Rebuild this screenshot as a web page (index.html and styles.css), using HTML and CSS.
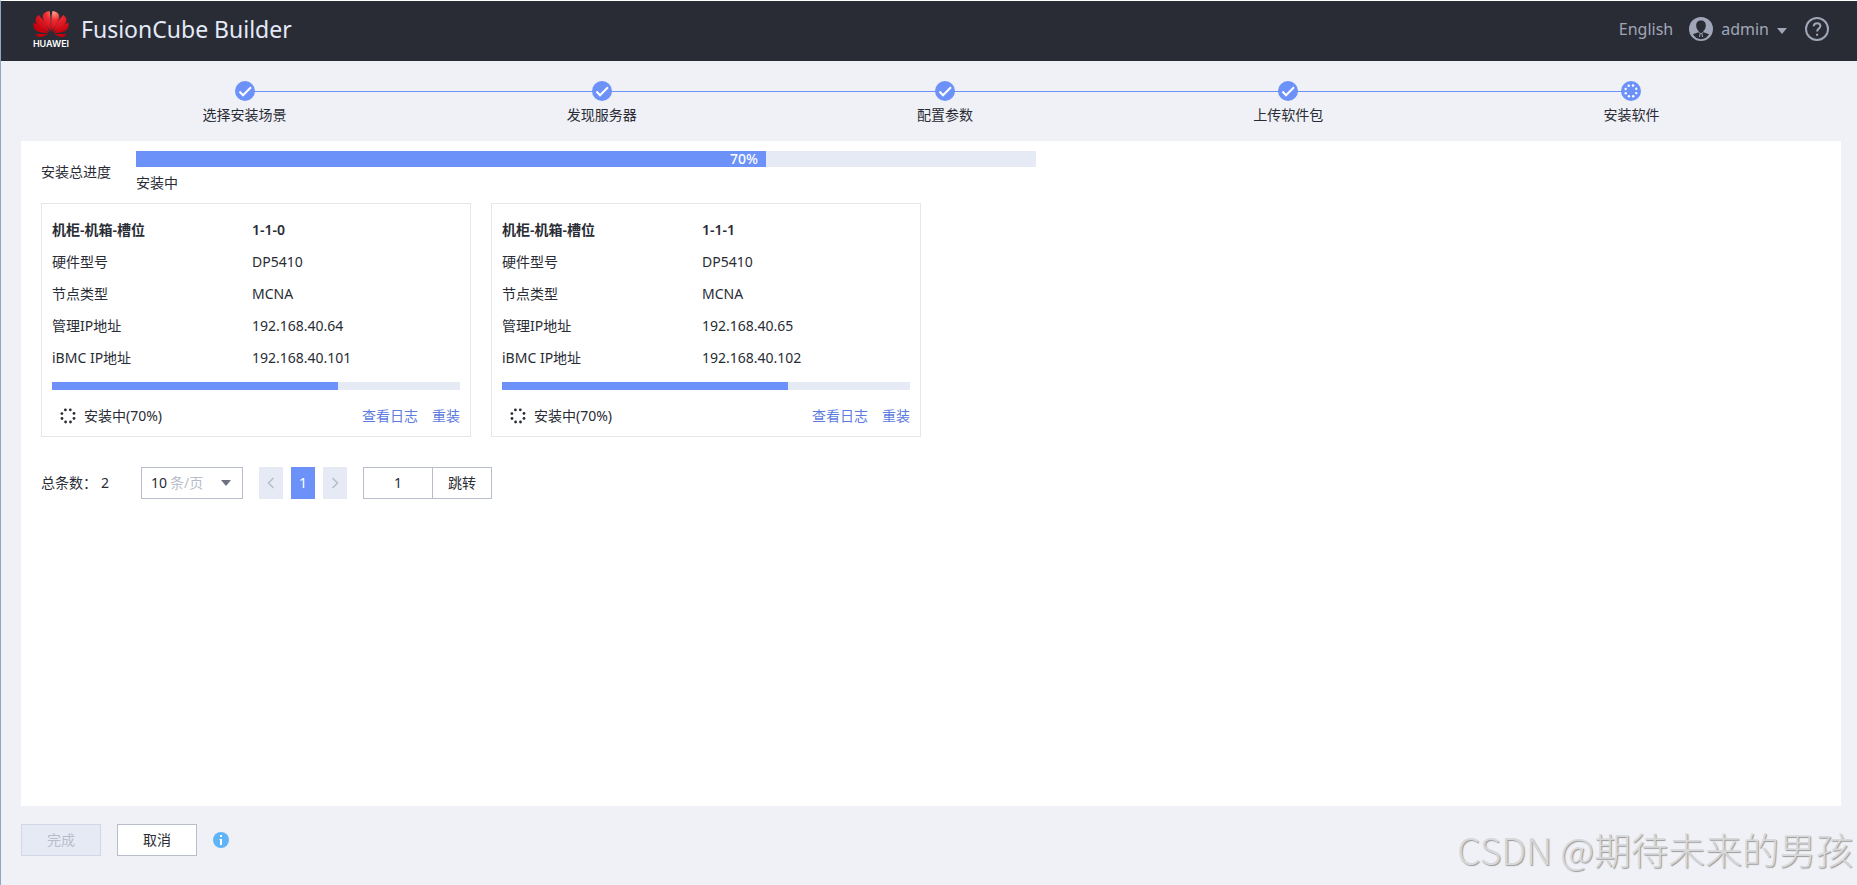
FILE: index.html
```html
<!DOCTYPE html>
<html lang="zh-CN">
<head>
<meta charset="utf-8">
<title>FusionCube Builder</title>
<link rel="stylesheet" href="styles.css">
</head>
<body>
<svg class="defs" aria-hidden="true">
  <symbol id="check" viewBox="0 0 20 20"><circle cx="10" cy="10" r="10" fill="#6c92fa"/><path d="M4.500 10.500l3.500 3.700 8-8" fill="none" stroke="#fff" stroke-width="2"/></symbol>
  <symbol id="dots" viewBox="0 0 16 16"><g fill="currentColor"><circle cx="5.400" cy="1.900" r="1.400"/><circle cx="10.300" cy="1.800" r="1.400"/><circle cx="14" cy="5.400" r="1.400"/><circle cx="14" cy="10.400" r="1.400"/><circle cx="10.500" cy="14" r="1.400"/><circle cx="5.600" cy="14" r="1.400"/><circle cx="2" cy="10.500" r="1.400"/><circle cx="1.900" cy="5.600" r="1.400"/></g></symbol>
</svg>
<header class="topbar">
  <svg class="logo" viewBox="0 0 36 38" role="img" aria-label="HUAWEI">
    <defs><radialGradient id="red" gradientUnits="userSpaceOnUse" cx="21" cy="3" r="24"><stop offset="0" stop-color="#ff9c82"/><stop offset=".35" stop-color="#ee2b32"/><stop offset="1" stop-color="#c4000c"/></radialGradient></defs>
    <g fill="url(#red)" transform="scale(1 .88)">
      <path d="M17.500 24.500C18 17 18 9 16.600 1.200 12 1.600 9.600 4.500 9.800 8c.2 5 4.400 11.500 7.700 16.500z"/>
      <path d="M18.500 24.500C18 17 18 9 19.400 1.200 24 1.600 26.400 4.500 26.200 8c-.2 5-4.400 11.500-7.700 16.500z"/>
      <path d="M16.300 25.300C14 18 10.500 11 5.600 5.800 2.300 8.500 1.600 12 3.800 15.500c2.500 4 8 7.300 12.500 9.800z"/>
      <path d="M19.700 25.300C22 18 25.500 11 30.400 5.800 33.700 8.500 34.400 12 32.200 15.500c-2.500 4-8 7.300-12.500 9.800z"/>
      <path d="M15.500 26.300C11 21.500 5.500 17 .6 14.200-.4 19 1.300 22.800 5 24.500c3 1.300 7 1.700 10.500 1.800z"/>
      <path d="M20.500 26.300C25 21.500 30.500 17 35.400 14.200 36.400 19 34.700 22.800 31 24.500c-3 1.300-7 1.700-10.500 1.800z"/>
      <path d="M15.300 27.200H2.600c1 3.200 4.200 4.400 7.200 3 2-.9 4-2.100 5.500-3z"/>
      <path d="M20.700 27.200h12.700c-1 3.200-4.200 4.400-7.200 3-2-.9-4-2.100-5.500-3z"/>
    </g>
    <text class="logo-text" x="18" y="37" text-anchor="middle">HUAWEI</text>
  </svg>
  <h1 class="product">FusionCube Builder</h1>
  <nav class="tools">
    <a class="tool" href="#">English</a>
    <button class="tool user" type="button">
      <svg width="24" height="24" viewBox="0 0 24 24"><circle cx="12" cy="12" r="12" fill="#a0a6b8"/><path d="M7.200 8.500C7.200 5 9 3.500 12 3.500S16.800 5 16.800 8.500c0 2.600-1 4.300-2.300 5.300v1.400l5.600 2.100c-1.900 3.200-4.800 4.900-8.100 4.900s-6.200-1.700-8.100-4.900l5.600-2.100v-1.400c-1.300-1-2.300-2.700-2.300-5.300z" fill="#292c35"/><path d="M9.500 15l2.500 2 2.500-2M11 17l-.5 3M13 17l.5 3" stroke="#a0a6b8" fill="none"/></svg>
      <span>admin</span>
      <svg class="user-caret" width="10" height="6" viewBox="0 0 10 6"><path d="M0 0h10L5 6z" fill="#a0a6b8"/></svg>
    </button>
    <button class="tool" type="button" aria-label="Help">
      <svg width="24" height="24" viewBox="0 0 24 24" fill="none" stroke="#a0a6b8" stroke-width="2"><circle cx="12" cy="12" r="11"/><path d="M8.700 9.300c.1-2 1.500-3 3.400-3 2 0 3.300 1.100 3.300 2.800 0 2.300-3.300 2.600-3.300 5.400M12.100 16.700v2"/></svg>
    </button>
  </nav>
</header>
<ol class="steps">
  <li class="step"><svg class="mark"><use href="#check"/></svg>选择安装场景</li>
  <li class="step"><svg class="mark"><use href="#check"/></svg>发现服务器</li>
  <li class="step"><svg class="mark"><use href="#check"/></svg>配置参数</li>
  <li class="step"><svg class="mark"><use href="#check"/></svg>上传软件包</li>
  <li class="step"><svg class="mark current" viewBox="0 0 20 20"><circle cx="10" cy="10" r="10" fill="#6c92fa"/><use href="#dots" x="3" y="3" width="14" height="14"/></svg>安装软件</li>
</ol>
<main class="panel">
  <section class="overall">
    <span class="overall-label">安装总进度</span>
    <div class="overall-body">
      <div class="bar bar-large"><div class="fill" style="width:70%">70%</div></div>
      <span>安装中</span>
    </div>
  </section>
  <section class="cards">
    <article class="card">
      <dl class="facts">
        <dt class="strong">机柜-机箱-槽位</dt><dd class="strong">1-1-0</dd>
        <dt>硬件型号</dt><dd>DP5410</dd>
        <dt>节点类型</dt><dd>MCNA</dd>
        <dt>管理IP地址</dt><dd>192.168.40.64</dd>
        <dt>iBMC IP地址</dt><dd>192.168.40.101</dd>
      </dl>
      <div class="bar"><div class="fill" style="width:70%"></div></div>
      <div class="card-foot"><svg class="spinner"><use href="#dots"/></svg><span class="state">安装中(70%)</span><a href="#">查看日志</a><a href="#">重装</a></div>
    </article>
    <article class="card">
      <dl class="facts">
        <dt class="strong">机柜-机箱-槽位</dt><dd class="strong">1-1-1</dd>
        <dt>硬件型号</dt><dd>DP5410</dd>
        <dt>节点类型</dt><dd>MCNA</dd>
        <dt>管理IP地址</dt><dd>192.168.40.65</dd>
        <dt>iBMC IP地址</dt><dd>192.168.40.102</dd>
      </dl>
      <div class="bar"><div class="fill" style="width:70%"></div></div>
      <div class="card-foot"><svg class="spinner"><use href="#dots"/></svg><span class="state">安装中(70%)</span><a href="#">查看日志</a><a href="#">重装</a></div>
    </article>
  </section>
  <nav class="pager" aria-label="分页">
    <span class="total">总条数：<span class="count">2</span></span>
    <label class="size">
      <select class="size-select" aria-label="每页条数"><option>10</option><option>20</option></select>
      <span class="unit">条/页</span>
      <svg class="caret" width="10" height="6" viewBox="0 0 10 6"><path d="M0 0h10L5 6z" fill="#6c7080"/></svg>
    </label>
    <div class="pages">
      <button class="page" type="button" disabled aria-label="上一页"><svg width="8" height="12" viewBox="0 0 8 12"><path d="M6.500 1L1.500 6l5 5" fill="none" stroke="#b8bdcb" stroke-width="1.500"/></svg></button>
      <button class="page active" type="button">1</button>
      <button class="page" type="button" disabled aria-label="下一页"><svg width="8" height="12" viewBox="0 0 8 12"><path d="M1.500 1l5 5-5 5" fill="none" stroke="#b8bdcb" stroke-width="1.500"/></svg></button>
    </div>
    <div class="jump"><input class="jump-input" type="text" value="1" aria-label="页码"><button class="jump-go" type="button">跳转</button></div>
  </nav>
</main>
<footer class="actions">
  <button class="btn" type="button" disabled>完成</button>
  <button class="btn" type="button">取消</button>
  <svg width="16" height="16" viewBox="0 0 16 16"><circle cx="8" cy="8" r="8" fill="#5fb4f8"/><path d="M7 3h2v2H7zM6.500 7H9v6H7V8h-.5z" fill="#fff"/></svg>
</footer>
<div class="watermark">CSDN @期待未来的男孩</div>
</body>
</html>
```
FILE: styles.css
```css
* { box-sizing: border-box; }
body {
  margin: 0;
  min-height: 100vh;
  display: flex;
  flex-direction: column;
  border-top: 1px solid #fff;
  border-left: 1px solid #8fa6c0;
  background: #f0f1f6;
  color: #292c35;
  font: 14px/20px "Noto Sans", "Noto Sans CJK SC", sans-serif;
}
button, input, select { font: inherit; color: inherit; margin: 0; padding: 0; border: 0; background: none; }
a { color: #5e7ce0; text-decoration: none; }
.defs { position: absolute; width: 0; height: 0; }
.topbar { height: 60px; flex: none; display: flex; align-items: center; padding: 0 28px 4px 32px; background: #292c35; }
.logo { width: 36px; height: 38px; margin-right: 12px; flex: none; }
.logo-text { font: 600 9px Inter, sans-serif; fill: #fff; }
.product { margin: 0; color: #e4e9f7; font-size: 23px; line-height: 32px; font-weight: 400; }
.tools { margin-left: auto; display: flex; align-items: center; gap: 16px; color: #a0a6b8; font-size: 16px; }
.tool { display: flex; align-items: center; color: inherit; }
.user { gap: 8px; margin-right: 2px; }
.user-caret { margin-top: 4px; }

.steps { list-style: none; margin: 0; padding: 20px 54px 0 58px; height: 80px; flex: none; display: grid; grid-template-columns: 371fr repeat(4, 343fr); }
.step { display: flex; flex-direction: column; align-items: center; gap: 4px; position: relative; }
.mark { width: 20px; height: 20px; position: relative; z-index: 1; }
.current { color: #fff; }
.step::before { content: ""; position: absolute; top: 10px; left: 0; right: 0; height: 1px; background: #6c92fa; }
.step:first-child::before { left: 50%; }
.step:last-child::before { right: 50%; }

.panel { flex: 1; margin: 0 16px 0 20px; padding: 10px 20px; background: #fff; }
.overall { display: flex; align-items: center; gap: 25px; }
.overall-body { width: 900px; max-width: 100%; display: flex; flex-direction: column; gap: 6px; }
.bar { height: 8px; background: #e6eaf5; }
.bar-large { height: 16px; }
.fill { height: 100%; padding-right: 8px; background: #6c92fa; color: #fff; text-align: right; line-height: 16px; font-weight: 500; }
.cards { display: flex; flex-wrap: wrap; gap: 20px; margin-top: 10px; }
.card { width: 430px; padding: 10px; border: 1px solid #e6e6e6; }
.facts { margin: 0 0 8px; display: grid; grid-template-columns: 200px 1fr; line-height: 32px; }
.facts dt, .facts dd { margin: 0; }
.strong { font-weight: 600; }
.card-foot { display: flex; align-items: center; gap: 14px; margin-top: 16px; }
.spinner { width: 16px; height: 16px; margin: 0 -6px 0 8px; }
.state { margin-right: auto; }

.pager { display: flex; align-items: center; margin-top: 30px; }
.total { width: 100px; }
.count { margin-left: 4px; }
.size { position: relative; display: flex; align-items: center; width: 102px; height: 32px; border: 1px solid #b8bdcb; }
.size-select { appearance: none; width: 100%; height: 100%; padding-left: 9px; }
.unit { position: absolute; left: 28px; color: #b8bdcb; pointer-events: none; }
.caret { position: absolute; right: 11px; pointer-events: none; }
.pages { display: flex; gap: 8px; margin: 0 16px; }
.page { width: 24px; height: 32px; display: flex; align-items: center; justify-content: center; background: #e6eaf5; }
.active { background: #6c92fa; color: #fff; }
.jump { display: flex; width: 129px; height: 32px; border: 1px solid #b8bdcb; }
.jump-input { width: 68px; text-align: center; }
.jump-go { flex: 1; border-left: 1px solid #b8bdcb; }

.actions { height: 79px; flex: none; display: flex; align-items: flex-start; gap: 16px; padding: 18px 20px; }
.actions svg { margin-top: 8px; }
.btn { width: 80px; height: 32px; border: 1px solid #b8bdcb; background: #fff; }
.btn:disabled { color: #b8bdcb; background: #e6eaf5; border-color: #d0d7e8; }
.watermark { position: absolute; right: 4px; bottom: 10px; color: #d6d8da; font: 300 37px/52px "Noto Sans CJK SC", sans-serif; text-shadow: 1px 1px 1px #999; pointer-events: none; }
```
